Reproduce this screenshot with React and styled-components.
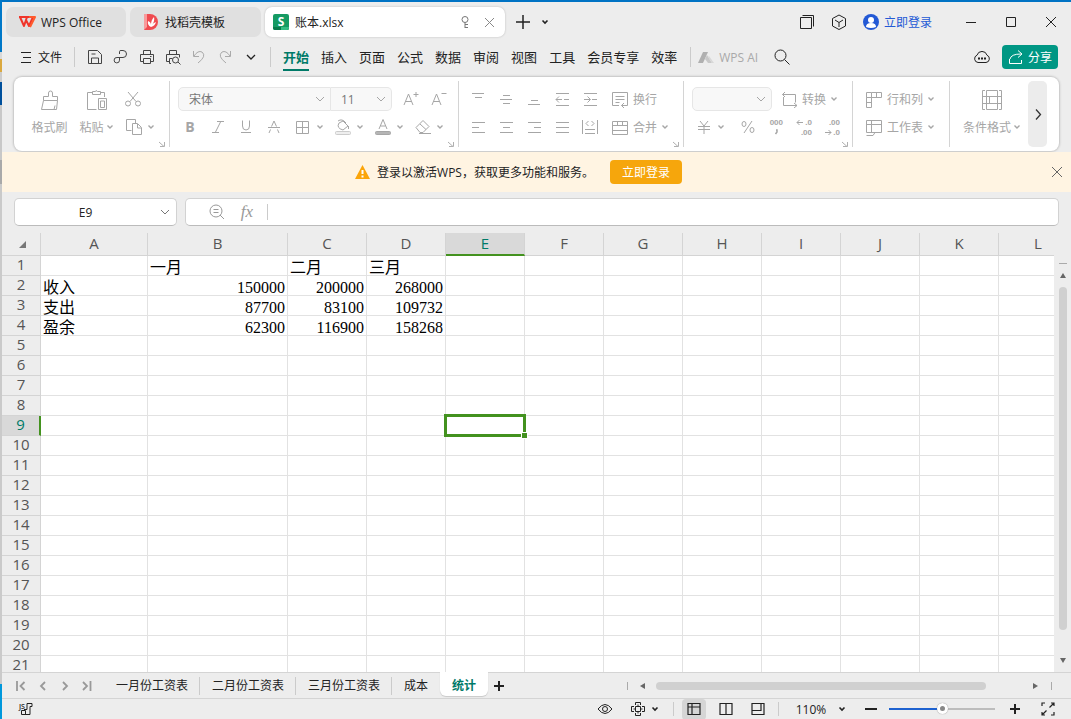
import React, { useState } from 'react';
import styled, { createGlobalStyle, css } from 'styled-components';

const UI = '"Open Sans", "Noto Sans CJK SC", sans-serif';
const SONG = '"Liberation Serif", "Noto Sans CJK SC", serif';
const LINE = '#d4d4d4';
const MUTED = '#a6a6a6';
const TEAL = '#007a68';
const GREEN = '#43921f';

const Global = createGlobalStyle`
  *, *::after { box-sizing: border-box; }
  body { margin: 0; font-family: ${UI}; font-size: 12px; color: #222; }
  button, input, select { font: inherit; color: inherit; border: 0; margin: 0; padding: 0; background: none; outline: none; }
`;

const Desktop = styled.div`
  height: 100vh;
  padding: 2px 0 0 2px;
  overflow: hidden;
  background: linear-gradient(#0078c8 0 52px, #d9d9d9 52px 59px, #dba93f 59px 72px, #cccccc 72px 82px, #00509c 82px 105px, #c8c8c8 105px 160px, #a9a9a9 160px 184px, #cacaca 184px 684px, #0098dc 684px) left / 2px 100% no-repeat, #0073c4;
`;
const Window = styled.div`
  height: 100%;
  display: flex;
  flex-direction: column;
  background: #ededed;
`;
const Spacer = styled.div`
  flex: 1;
`;
const IconButton = styled.button`
  flex: none;
  width: ${(p) => p.$w || 28}px;
  height: 28px;
  display: flex;
  align-items: center;
  justify-content: center;
  color: ${(p) => p.$color || 'inherit'};
`;
const Rule = styled.span`
  flex: none;
  width: 1px;
  height: ${(p) => p.$h || 20}px;
  margin: 0 ${(p) => p.$gap || 0}px;
  background: #cbcbcb;
`;

/* Title bar */
const TitleBar = styled.header`
  flex: none;
  height: 40px;
  padding: 0 0 0 4px;
  display: flex;
  align-items: center;
`;
const DocTab = styled.button`
  flex: none;
  width: ${(p) => p.$w}px;
  height: 30px;
  margin-right: 4px;
  padding: 0 12px;
  display: flex;
  align-items: center;
  gap: 5px;
  border-radius: 7px;
  background: #e0e0e0;
`;
const ActiveDoc = styled.div`
  flex: none;
  width: 240px;
  height: 30px;
  padding: 0 6px 0 8px;
  display: flex;
  align-items: center;
  gap: 6px;
  border-radius: 7px;
  background: #fff;
  box-shadow: 0 0 2px #b5b5b5;
`;
const Login = styled.button`
  display: flex;
  align-items: center;
  gap: 5px;
  margin: 0 19px 0 8px;
  color: #2359d5;
`;

/* Menu */
const MenuBar = styled.nav`
  flex: none;
  height: 34px;
  padding: 0 13px 4px 14px;
  display: flex;
  align-items: center;
`;
const FileButton = styled.button`
  display: flex;
  align-items: center;
  gap: 6px;
  margin: 0 12px 0 4px;
`;
const MenuTab = styled.button`
  flex: none;
  height: 28px;
  margin: 0 6px;
  padding-top: 1px;
  font-size: 13px;
  line-height: 20px;
  border-bottom: 2px solid ${(p) => (p.$on ? TEAL : 'transparent')};
  color: ${(p) => (p.$on ? TEAL : 'inherit')};
  font-weight: ${(p) => (p.$on ? 700 : 400)};
`;
const AiButton = styled.button`
  display: flex;
  align-items: center;
  gap: 4px;
  margin-right: 10px;
  color: #a9a9a9;
`;
const Share = styled.button`
  width: 56px;
  height: 24px;
  margin-left: 6px;
  display: flex;
  align-items: center;
  justify-content: center;
  gap: 4px;
  border-radius: 4px;
  background: #009784;
  color: #fff;
`;

/* Ribbon */
const Ribbon = styled.section`
  flex: none;
  height: 74px;
  margin: 1px 12px 1px 12px;
  padding: 4px 12px 4px 1px;
  display: flex;
  border-radius: 8px;
  background: #fff;
  box-shadow: 0 0 2px 1px #c4c4c4;
  color: ${MUTED};
`;
const Group = styled.div`
  position: relative;
  flex: none;
  width: ${(p) => p.$w}px;
  padding: 4px 0 6px ${(p) => p.$pad || 0}px;
  border-right: 1px solid ${LINE};
  ${(p) => p.$last && css`flex: 1; border: 0;`}
`;
const Corner = styled.svg`
  position: absolute;
  right: 4px;
  bottom: 0;
`;
const Columns = styled.div`
  display: flex;
`;
const Column = styled.div`
  width: ${(p) => p.$w}px;
`;
const Row = styled.div`
  height: 28px;
  padding-left: ${(p) => p.$pad || 0}px;
  display: flex;
  align-items: center;
`;
const BigButton = styled.button`
  width: ${(p) => p.$w}px;
  height: 56px;
  display: flex;
  flex-direction: column;
  align-items: center;
`;
const BigIcon = styled.span`
  height: 30px;
  display: flex;
  align-items: center;
`;
const BigLabel = styled.span`
  height: 24px;
  display: flex;
  align-items: center;
  gap: 2px;
  white-space: nowrap;
`;
const Split = styled.button`
  flex: none;
  width: ${(p) => p.$w || 40}px;
  height: 28px;
  padding-left: 6px;
  display: flex;
  align-items: center;
  gap: 4px;
`;
const LabelButton = styled.button`
  flex: none;
  height: 28px;
  margin-left: ${(p) => p.$ml || 0}px;
  display: flex;
  align-items: center;
  gap: 4px;
  white-space: nowrap;
`;
const Picker = styled.label`
  position: relative;
  flex: none;
  width: ${(p) => p.$w}px;
  height: 24px;
  border: 1px solid #e6e6e6;
  border-radius: ${(p) => p.$r || '5px'};
  background: #f8f8f8;
  & + & { border-left: 0; }
  select { width: 100%; height: 22px; padding-left: 10px; appearance: none; color: #777; opacity: 1; }
  svg { position: absolute; right: 4px; top: 5px; pointer-events: none; }
`;
const ScrollRibbon = styled.button`
  flex: none;
  width: 19px;
  border-radius: 5px;
  background: #ececec;
  color: #333;
  display: flex;
  align-items: center;
  justify-content: center;
`;

/* Sign-in banner */
const Banner = styled.aside`
  flex: none;
  height: 40px;
  display: flex;
  align-items: center;
  background: #fff4e2;
`;
const BannerText = styled.div`
  flex: 1;
  padding-right: 8px;
  display: flex;
  align-items: center;
  justify-content: center;
  gap: 7px;
`;
const BannerButton = styled.button`
  width: 72px;
  height: 24px;
  margin-left: 9px;
  border-radius: 4px;
  background: #f6a60c;
  color: #fff;
`;

/* Formula bar */
const FormulaBar = styled.section`
  flex: none;
  height: 41px;
  padding: 6px 12px 7px;
  display: flex;
  gap: 8px;
`;
const Field = styled.div`
  flex: ${(p) => (p.$w ? 'none' : 1)};
  width: ${(p) => (p.$w ? `${p.$w}px` : 'auto')};
  height: 28px;
  display: flex;
  align-items: center;
  border: 1px solid #d2d2d2;
  border-bottom-color: #bbb;
  border-radius: 5px;
  background: #fff;
  color: #999;
  input { flex: 1; min-width: 0; height: 26px; color: #222; }
`;
const NameInput = styled.input`
  padding-left: 2px;
  text-align: center;
`;

/* Sheet */
const SheetArea = styled.main`
  flex: 1;
  min-height: 0;
  display: flex;
`;
const Viewport = styled.div`
  flex: 1;
  min-width: 0;
  overflow: hidden;
`;
const Sheet = styled.table`
  width: 100%;
  min-width: 1076px;
  table-layout: fixed;
  border-spacing: 0;
  background: #fff;
`;
const headSelected = css`
  background: #d9d9d9;
  color: ${TEAL};
`;
const HeadCell = styled.th`
  height: 23px;
  padding: 0 0 2px;
  border-right: 1px solid ${LINE};
  border-bottom: 1px solid ${LINE};
  background: #ededed;
  color: #555;
  font-size: 15px;
  font-weight: 400;
  line-height: 20px;
  vertical-align: middle;
  svg { display: block; margin: 3px 0 0 17px; }
  ${(p) => p.$on && css`${headSelected} padding-bottom: 1px; border-bottom: 2px solid ${GREEN};`}
`;
const RowHead = styled.th`
  height: 20px;
  padding: 0 0 3px;
  border-right: 1px solid ${LINE};
  border-bottom: 1px solid ${LINE};
  background: #ededed;
  color: #555;
  font-size: 15px;
  font-weight: 400;
  line-height: 16px;
  ${(p) => p.$on && css`${headSelected} border-right: 2px solid ${GREEN};`}
`;
const Cell = styled.td`
  position: relative;
  height: 20px;
  padding: 4px 2px 0 2px;
  border-right: 1px solid #e2e2e2;
  border-bottom: 1px solid #e2e2e2;
  font-family: ${SONG};
  font-size: 16px;
  line-height: 15px;
  color: #000;
  white-space: nowrap;
  text-align: ${(p) => (p.$num ? 'right' : 'left')};
`;
const Cursor = styled.span`
  position: absolute;
  z-index: 1;
  inset: -2px;
  border: 3px solid ${GREEN};
  &::after {
    content: '';
    position: absolute;
    right: -5px;
    bottom: -5px;
    width: 7px;
    height: 7px;
    border: 1px solid #fff;
    background: ${GREEN};
  }
`;
const VScroll = styled.div`
  flex: none;
  width: 17px;
  padding: 30px 0 6px;
  display: flex;
  flex-direction: column;
  align-items: center;
`;
const SplitMark = styled.span`
  flex: none;
  width: ${(p) => (p.$v ? 1 : 8)}px;
  height: ${(p) => (p.$v ? 8 : 1)}px;
  background: #aaa;
`;
const ArrowButton = styled.button`
  width: 12px;
  height: 12px;
  flex: none;
  display: flex;
  align-items: center;
  justify-content: center;
  color: #666;
`;
const VTrack = styled.div`
  flex: 1;
  width: 8px;
  margin: 6px 0;
`;
const VThumb = styled.div`
  width: 8px;
  height: 95%;
  border-radius: 4px;
  background: #d0d0d0;
`;
const VControls = styled.div`
  flex: 1;
  padding-top: 5px;
  display: flex;
  flex-direction: column;
  align-items: center;
`;

/* Sheet tabs */
const TabsBar = styled.nav`
  flex: none;
  height: 27px;
  padding: 0 19px 0 8px;
  display: flex;
  align-items: center;
  border-top: 1px solid ${LINE};
  border-bottom: 1px solid ${LINE};
`;
const NavGroup = styled.div`
  display: flex;
  margin-right: 6px;
  color: #999;
`;
const SheetTab = styled.button`
  flex: none;
  height: 18px;
  padding: 0 11px 0 12px;
  line-height: 18px;
  border-right: 1px solid ${(p) => (p.$plain ? 'transparent' : '#cbcbcb')};
  ${(p) => p.$on && css`
    align-self: flex-start;
    height: 24px;
    margin-top: -1px;
    border-right: 0;
    padding: 3px 12px 0;
    border-radius: 0 0 6px 6px;
    background: #fff;
    box-shadow: 0 1px 1px #c9c9c9;
    color: ${TEAL};
    font-weight: 700;
  `}
`;
const HScroll = styled.div`
  width: 425px;
  display: flex;
  align-items: center;
`;
const HTrack = styled.div`
  flex: 1;
`;
const HThumb = styled.div`
  width: 91%;
  height: 8px;
  border-radius: 4px;
  background: #d0d0d0;
`;

/* Status bar */
const StatusBar = styled.footer`
  flex: none;
  height: 20px;
  padding: 0 7px 0 10px;
  display: flex;
  align-items: center;
`;
const StatusButton = styled.button`
  flex: none;
  width: ${(p) => p.$w || 32}px;
  height: 21px;
  display: flex;
  align-items: center;
  justify-content: center;
  gap: 6px;
  border-radius: 4px;
  background: ${(p) => (p.$on ? '#d5d5d5' : 'none')};
`;
const Slider = styled.input`
  width: 106px;
  height: 14px;
  margin: 0 6px;
  appearance: none;
  &::-webkit-slider-runnable-track {
    height: 2px;
    background: linear-gradient(90deg, #1e62d0 0 51%, #bdbdbd 51%);
  }
  &::-webkit-slider-thumb {
    appearance: none;
    width: 11px;
    height: 11px;
    margin-top: -5px;
    border: 3px solid #fff;
    border-radius: 50%;
    background: #888;
    box-shadow: 0 0 1px #777;
  }
`;

/* Icons */
const Icon = ({ w = 18, h = w, sw = 1, children }) => (
  <svg width={w} height={h} viewBox={`0 0 ${w} ${h}`} fill="none" stroke="currentColor" strokeWidth={sw} aria-hidden="true">
    {children}
  </svg>
);
const P = ({ d, w, h, sw }) => <Icon w={w} h={h} sw={sw}><path d={d} /></Icon>;
const Caret = ({ dark }) => <P w={8} h={8} sw={dark ? 1.6 : 1.4} d="M1.5 2.5 4 5l2.5-2.5" />;
const Letter = ({ x, y, size, weight = 400, fill = 'currentColor', children }) => (
  <text x={x} y={y} fontSize={size} fontWeight={weight} fill={fill} stroke="none" textAnchor="middle" fontFamily={UI}>{children}</text>
);
const Digits = ({ x, y, children }) => (
  <text x={x} y={y} fontSize="8" fontWeight="700" fill="currentColor" stroke="none" textAnchor="end" fontFamily='"Liberation Sans", sans-serif'>{children}</text>
);
const GroupCorner = () => (
  <Corner width="6" height="6" viewBox="0 0 6 6" fill="none" stroke="#b0b0b0"><path d="M0 1 5 5.5M5.5 1v4.5H1" /></Corner>
);
const Close = ({ s = 12 }) => <P w={s} d={`M1 1 ${s - 1} ${s - 1}M${s - 1} 1 1 ${s - 1}`} />;
const Chevron = () => <P w={12} d="M2 4 6 8l4-4" />;

const quick = [
  ['保存', 'M2.5 2.5h9l4 4v9h-13zM5.5 15v-5h7v5M5.5 6h4'],
  ['输出为PDF', 'M7.5 6V3.5q0-1 1.5-1h2a3.5 3.5 0 0 1 0 7H5a2.7 2.7 0 1 0 2.500 2.700V9.500'],
  ['打印', 'M5.5 6V2.5h7V6M5 13.5H2.5v-7h13v7H13M5.5 10.5h7v5h-7zM12 8.5h1.5'],
  ['打印预览', 'M5.5 6V2.5h7V6M5 13.5H2.5v-7h13v3M7 15.5H5.5v-5h3M11.5 9a3 3 0 1 1 0 6a3 3 0 0 1 0-6M14 14l2.5 2.5'],
];
const tabs = ['开始', '插入', '页面', '公式', '数据', '审阅', '视图', '工具', '会员专享', '效率'];
const alignTop = [
  ['顶端对齐', 'M3 3.5h12M6 7.5h7'],
  ['垂直居中', 'M6 5.5h7M3 9.5h12M6 13.5h7'],
  ['底端对齐', 'M6 10.5h7M3 14.5h12'],
  ['减少缩进', 'M3 3.5h13M3 15.5h13M3 9.5h6M11 9.5h5M6 6.5l-3 3 3 3'],
  ['增加缩进', 'M3 3.5h13M3 15.5h13M3 9.5h6M11 9.5h5M6.5 6.5l3 3-3 3'],
];
const alignBottom = [
  ['左对齐', 'M3 4.5h13M3 9.5h7M3 14.5h13'],
  ['居中', 'M3 4.5h13M6 9.5h7M3 14.5h13'],
  ['右对齐', 'M3 4.5h13M9 9.5h7M3 14.5h13'],
  ['两端对齐', 'M3 4.5h13M3 9.5h13M3 14.5h13'],
  ['分散对齐', 'M1.5 2v14M16.5 2v14M4 11.5h10M4 15.5h10M7.5 3 5 5.5 7.5 8M10.5 3 13 5.5 10.5 8'],
];
const columns = [107, 140, 79, 79, 79, 79, 79, 79, 79, 79, 79, 79];
const letters = 'ABCDEFGHIJKL'.split('');
const data = [
  ['', '一月', '二月', '三月'],
  ['收入', 150000, 200000, 268000],
  ['支出', 87700, 83100, 109732],
  ['盈余', 62300, 116900, 158268],
];
const rows = Array.from({ length: 21 }, (_, i) => data[i] || []);
const sheets = ['一月份工资表', '二月份工资表', '三月份工资表', '成本', '统计'];

function Title() {
  return (
    <TitleBar>
      <DocTab $w={120}>
        <svg width="18" height="14" viewBox="0 0 18 14" fill="none" stroke="#f0352b" strokeWidth="2" strokeLinejoin="round">
          <path d="M1 2h8l-3 9L2 2M8 5l3 6 4-9H9" /><path d="M11 2h6l-5 10" stroke="#ff5a2c" />
        </svg>
        WPS Office
      </DocTab>
      <DocTab $w={131}>
        <svg width="18" height="18" viewBox="0 0 18 18">
          <path d="M2 1h6a8 8 0 0 1 0 16H2z" fill="#ef4b50" /><path d="M2 1h3v13l-3 3z" fill="#f89b9c" />
          <path d="M9 14Q5 12 6 8q3 1 3 4 0-5 3-8 1 4-2 8 1-2 4-3-1 4-5 5" fill="#fff" />
        </svg>
        找稻壳模板
      </DocTab>
      <ActiveDoc>
        <svg width="16" height="16" viewBox="0 0 16 16">
          <rect width="16" height="16" rx="2" fill="#159a63" /><path d="M0 13h16v1a2 2 0 0 1-2 2H2a2 2 0 0 1-2-2z" fill="#087a4b" />
          <path d="M8 13h8v1a2 2 0 0 1-2 2H8z" fill="#35bd83" />
          <Letter x={8} y={12} size={12} weight={700} fill="#fff">S</Letter>
        </svg>
        账本.xlsx
        <Spacer />
        <IconButton $w={16} $color="#777" aria-label="固定">
          <P w={12} h={14} d="M6 1.5a3 3 0 1 1 0 6a3 3 0 0 1 0-6M6 7.5V13M6 9.5h3M6 12.5h3" />
        </IconButton>
        <IconButton $w={20} $color="#888" aria-label="关闭标签"><Close s={11} /></IconButton>
      </ActiveDoc>
      <IconButton $w={36} aria-label="新建"><P w={14} sw={1.5} d="M7 0v14M0 7h14" /></IconButton>
      <IconButton $w={8} aria-label="更多标签"><Caret dark /></IconButton>
      <Spacer />
      <IconButton $w={32} aria-label="窗口"><P w={16} d="M1.5 3.5h11v11h-11zM3.5 1.5h11v11" /></IconButton>
      <IconButton $w={32} aria-label="应用"><P w={16} d="M8 1l6.5 3.5V12L8 15.5 1.5 12V4.5zM4 6l4 2.5L12 6M8 8.5V13" /></IconButton>
      <Login>
        <svg width="16" height="16" viewBox="0 0 16 16"><circle cx="8" cy="8" r="8" fill="#2359d5" /><circle cx="8" cy="6" r="3" fill="#fff" /><path d="M3 13q0-4 5-4t5 4q-5 2-10 0" fill="#fff" /></svg>
        立即登录
      </Login>
      <IconButton $w={40} aria-label="最小化"><P w={12} d="M1 6.5h10" /></IconButton>
      <IconButton $w={40} aria-label="最大化"><P w={12} d="M1.5 1.5h9v9h-9z" /></IconButton>
      <IconButton $w={40} aria-label="关闭"><Close /></IconButton>
    </TitleBar>
  );
}

function Menu() {
  return (
    <MenuBar>
      <FileButton><P w={12} d="M1 1.5h10M3 6.5h8M1 11.5h10" />文件</FileButton>
      <Rule />
      <Row $pad={7}>
        {quick.map(([n, d]) => <IconButton key={n} $w={26} $color="#444" aria-label={n}><P d={d} /></IconButton>)}
        <IconButton $w={26} $color="#aaa" aria-label="撤销"><P d="M3.5 3v5.5H9M4 8q4-6 8-4 5 4-4 11" /></IconButton>
        <IconButton $w={26} $color="#aaa" aria-label="恢复"><P d="M14.5 3v5.5H9M14 8q-4-6-8-4-5 4 4 11" /></IconButton>
        <IconButton $w={26} aria-label="更多"><P w={12} sw={1.3} d="M2 4l4 4 4-4" /></IconButton>
      </Row>
      <Rule $gap={6} />
      {tabs.map((t, i) => <MenuTab key={t} $on={i === 0}>{t}</MenuTab>)}
      <Rule $gap={7} />
      <AiButton>
        <svg width="17" height="12" viewBox="0 0 17 12"><path d="M5 1h5L5 12H0z" fill="#b0b0b0" /><path d="M9 4l5 8h-4L7 8z" fill="#c8c8c8" /><path d="M11 5l5 7h-2l-4-6z" fill="#d8d8d8" /></svg>
        WPS AI
      </AiButton>
      <IconButton aria-label="搜索"><P w={16} d="M6.5 1a5.5 5.5 0 1 1 0 11a5.5 5.5 0 0 1 0-11M10.5 10.5l5 5" /></IconButton>
      <Spacer />
      <IconButton aria-label="云">
        <Icon><path d="M5 14.5a3.8 3.8 0 0 1-1-7.3 5.200 5.200 0 0 1 10 0 3.800 3.800 0 0 1-1 7.300z" /><path d="M5 10.5h2M8 10.5h2M11 10.5h2" strokeWidth="2" /></Icon>
      </IconButton>
      <Share><P w={16} d="M1.5 10v4.5h12V11M2 10q1-5 11-5M10 1.5 14 5l-4 3.5" />分享</Share>
    </MenuBar>
  );
}

function RibbonBar() {
  return (
    <Ribbon>
      <Group $w={155} $pad={10}>
        <Columns>
          <BigButton $w={49}>
            <BigIcon><P w={22} d="M4.5 11.5v-4h5V4a2 2 0 0 1 4 0v3.5h5v4zM4.5 11.5l-2 9h15l1-9M15 20.5l1-4" /></BigIcon>
            <BigLabel>格式刷</BigLabel>
          </BigButton>
          <BigButton $w={45}>
            <BigIcon><P w={22} d="M6 3.5H1.5v17h9M15 3.5h3.5V8M6.5 5.5v-3h3q0-2 2 0h3v3zM12.5 9.5h8v11h-8zM14.5 12v6.5h4V12z" /></BigIcon>
            <BigLabel>粘贴<Caret /></BigLabel>
          </BigButton>
          <Column $w={40}>
            <Row $pad={2}><IconButton $w={24} aria-label="剪切"><P d="M4 2l8 9.500M14 2 6 11.5M4 11a2.5 2.5 0 1 1 0 5a2.5 2.5 0 0 1 0-5M14 11a2.5 2.5 0 1 1 0 5a2.5 2.5 0 0 1 0-5" /></IconButton></Row>
            <Split aria-label="复制"><P d="M6.5 12.5h-5v-11h9V5M7.5 5.5h5l4 4v7h-9zM12.5 6v4H16" /><Caret /></Split>
          </Column>
        </Columns>
        <GroupCorner />
      </Group>

      <Group $w={289} $pad={6}>
        <Row $pad={2}>
          <Picker $w={153} $r="5px 0 0 5px"><select aria-label="字体" defaultValue="宋体"><option>宋体</option></select><Chevron /></Picker>
          <Picker $w={61} $r="0 5px 5px 0"><select aria-label="字号" defaultValue="11"><option>11</option></select><Chevron /></Picker>
          <Row $pad={5}>
            <IconButton aria-label="增大字号"><Icon><path d="M2 15 6.5 4 11 15M3.5 11.5h6M11.5 4.5h5M14 2v5" /></Icon></IconButton>
            <IconButton aria-label="减小字号"><Icon><path d="M2 15 6.5 4 11 15M3.5 11.5h6M11.5 3.5h5" /></Icon></IconButton>
          </Row>
        </Row>
        <Row>
          <IconButton aria-label="加粗"><Icon><Letter x={9} y={14} size={14} weight={700}>B</Letter></Icon></IconButton>
          <IconButton aria-label="倾斜"><P d="M8 3.5h7M3 14.5h7M11.5 4l-5 10" /></IconButton>
          <IconButton aria-label="下划线"><P d="M5.5 2.5V8a3.5 4 0 0 0 7 0V2.5M4 14.5h10" /></IconButton>
          <IconButton aria-label="删除线"><P d="M9 3 6.5 8.5M9 3l2.5 5.5M3 9.5h12M5.5 11.5 4 15M12.5 11.5 14 15" /></IconButton>
          <Split aria-label="边框"><P d="M2.5 3.5h12v12h-12zM8.5 3.5v12M2.5 9.5h12" /><Caret /></Split>
          <Split aria-label="填充颜色"><Icon><path d="M5 5l4-2 5 5-5 4q-7-2-4-7M4 3q4-3 8 2M14.5 8v3" /><rect x="1.5" y="13.5" width="15" height="3" rx="1" fill="#eee" stroke="#ccc" /></Icon><Caret /></Split>
          <Split aria-label="字体颜色"><Icon><path d="M9 1.5 5 11M9 1.5 13 11M6.5 8h5" /><rect x="1.5" y="13.5" width="15" height="3" rx="1" fill="#b5b5b5" /></Icon><Caret /></Split>
          <Split aria-label="清除"><P d="M2 9.5l7-7 6 6-6 6H6zM6 6l6 5.5M5 15.5h12" /><Caret /></Split>
        </Row>
        <GroupCorner />
      </Group>

      <Group $w={225} $pad={5}>
        <Row>
          {alignTop.map(([n, d]) => <IconButton key={n} aria-label={n}><P d={d} /></IconButton>)}
          <LabelButton $ml={8}><P w={17} d="M.5 14.5v-13h15V12M3.5 5.5h9M3.5 8.5h9M3.5 11.5h4M.5 14.5H7M15.5 12v2.5h-6M12 12l-2.5 2.5L12 17" />换行</LabelButton>
        </Row>
        <Row>
          {alignBottom.map(([n, d]) => <IconButton key={n} aria-label={n}><P d={d} /></IconButton>)}
          <LabelButton $ml={8}><P w={17} d="M.5 2.5h15v13H.5zM.5 6.5h15M5.5 2.5v4M10.5 2.5v4M.5 11.5h15" />合并<Caret /></LabelButton>
        </Row>
        <GroupCorner />
      </Group>

      <Group $w={169} $pad={5}>
        <Row $pad={3}>
          <Picker $w={80}><select aria-label="数字格式"><option /></select><Chevron /></Picker>
          <LabelButton $ml={9}><P w={17} d="M4 1 1.5 3.5 4 6M1.5 3.5h13v8M2.5 6v8.5H16M13 12l3 2.5-3 2.5" />转换<Caret /></LabelButton>
        </Row>
        <Row>
          <Split $w={45} aria-label="货币"><P d="M5 3l4 5 4-5M3 8.5h12M3 11.5h12M9 8v8" /><Caret /></Split>
          <IconButton aria-label="百分比"><Icon><path d="M13 3 5 15M5 3.5a2 2.5 0 1 1 0 5a2 2.5 0 0 1 0-5M13 9.5a2 2.5 0 1 1 0 5a2 2.5 0 0 1 0-5" /></Icon></IconButton>
          <IconButton aria-label="千位分隔"><Icon w={18} h={20}><Digits x={16} y={8}>000</Digits><path d="M9 13h1v2l-1.5 2" strokeWidth="1.5" /></Icon></IconButton>
          <IconButton aria-label="增加小数位"><Icon w={18} h={20}><path d="M2 5.5h6M4.5 3 2 5.5 4.5 8" /><Digits x={17} y={8}>.0</Digits><Digits x={17} y={18}>.00</Digits></Icon></IconButton>
          <IconButton aria-label="减少小数位"><Icon w={18} h={20}><Digits x={17} y={8}>.00</Digits><path d="M2 15.5h6M5.5 13 8 15.5 5.5 18" /><Digits x={17} y={18}>.0</Digits></Icon></IconButton>
        </Row>
        <GroupCorner />
      </Group>

      <Group $w={97} $pad={13}>
        <Row><LabelButton><P w={17} d="M.5 1.5h5v5h-5zM5.5 1.5h10v5h-10M10.5 1.5v5M.5 6.5h5v10h-5zM.5 11.5h5" />行和列<Caret /></LabelButton></Row>
        <Row><LabelButton><P w={17} d="M.5 13.5v-12h15v12H8M.5 5.5h15M5.5 1.5v12M.5 13.5H9l-2 3H.5" />工作表<Caret /></LabelButton></Row>
      </Group>

      <Group $last $pad={6}>
        <BigButton $w={72}>
          <BigIcon><P w={22} d="M4 1.5H1.5v19H4M18 1.5h2.5v19H18M5.5 1.5h11v6h-11zM1.5 7.5h19M1.5 14.5h19M5.5 7.5v13h11v-13M8.5 7.5v7" /></BigIcon>
          <BigLabel>条件格式<Caret /></BigLabel>
        </BigButton>
      </Group>
      <ScrollRibbon aria-label="向右滚动"><P w={12} sw={1.3} d="M4 1.5l4.5 5-4.5 5" /></ScrollRibbon>
    </Ribbon>
  );
}

function Grid() {
  return (
    <SheetArea>
      <Viewport>
        <Sheet>
          <colgroup>
            <col style={{ width: 39 }} />
            {columns.map((w, i) => <col key={letters[i]} style={{ width: w }} />)}
          </colgroup>
          <thead>
            <tr>
              <HeadCell aria-label="全选"><svg width="8" height="8" viewBox="0 0 8 8"><path d="M7 0v7H0z" fill="#777" /></svg></HeadCell>
              {letters.map((l) => <HeadCell key={l} scope="col" $on={l === 'E'}>{l}</HeadCell>)}
            </tr>
          </thead>
          <tbody>
            {rows.map((row, r) => (
              <tr key={r}>
                <RowHead scope="row" $on={r === 8}>{r + 1}</RowHead>
                {letters.map((l, c) => (
                  <Cell key={l} $num={typeof row[c] === 'number'}>
                    {row[c]}
                    {r === 8 && l === 'E' && <Cursor />}
                  </Cell>
                ))}
              </tr>
            ))}
          </tbody>
        </Sheet>
      </Viewport>
      <VScroll>
        <SplitMark />
        <VControls>
          <ArrowButton aria-label="向上"><svg width="6" height="5" viewBox="0 0 6 5"><path d="M3 0l3 5H0z" fill="currentColor" /></svg></ArrowButton>
          <VTrack><VThumb /></VTrack>
          <ArrowButton aria-label="向下"><svg width="6" height="5" viewBox="0 0 6 5"><path d="M0 0h6L3 5z" fill="currentColor" /></svg></ArrowButton>
        </VControls>
      </VScroll>
    </SheetArea>
  );
}

function SheetTabs() {
  return (
    <TabsBar>
      <NavGroup>
        <IconButton $w={22} aria-label="第一个"><P w={12} sw={1.8} d="M2 1v10M9.5 2l-4 4 4 4" /></IconButton>
        <IconButton $w={22} aria-label="上一个"><P w={12} sw={1.8} d="M8 2 4 6l4 4" /></IconButton>
        <IconButton $w={22} aria-label="下一个"><P w={12} sw={1.8} d="M4 2l4 4-4 4" /></IconButton>
        <IconButton $w={22} aria-label="最后一个"><P w={12} sw={1.8} d="M2 2l4 4-4 4M9.5 1v10" /></IconButton>
      </NavGroup>
      {sheets.map((s, i) => <SheetTab key={s} $on={i === 4} $plain={i === 3}>{s}</SheetTab>)}
      <IconButton $w={22} aria-label="新建工作表"><P w={10} sw={2} d="M5 0v10M0 5h10" /></IconButton>
      <Spacer />
      <HScroll>
        <SplitMark $v />
        <IconButton aria-label="向左"><svg width="5" height="6" viewBox="0 0 5 6"><path d="M5 0v6L0 3z" fill="#666" /></svg></IconButton>
        <HTrack><HThumb /></HTrack>
        <IconButton $w={32} aria-label="向右"><svg width="5" height="6" viewBox="0 0 5 6"><path d="M0 0v6l5-3z" fill="#666" /></svg></IconButton>
        <SplitMark $v />
      </HScroll>
    </TabsBar>
  );
}

function Status() {
  const [zoom, setZoom] = useState(51);
  return (
    <StatusBar>
      <StatusButton $w={28} aria-label="JS 宏">
        <Icon w={16} h={14}><Letter x={4} y={7} size={7} weight={600}>JS</Letter><path d="M9 1.5h5v3h-2v8H3.5v-4h4v4M9 1.5v6H6" /></Icon>
      </StatusButton>
      <Spacer />
      <StatusButton aria-label="护眼模式"><Icon w={16} h={12}><path d="M1 6q7-9 14 0-7 9-14 0" /><circle cx="8" cy="6" r="2.5" /></Icon></StatusButton>
      <StatusButton $w={48} aria-label="阅读模式"><P w={14} d="M4.5 3V.5h5V3M4.5 11v2.500h5V11M3 4.5H.5v5H3M11 4.5h2.5v5H11M4.5 4.5h5v5h-5zM7 2.500v2M7 9.500v2M2.500 7h2M9.500 7h2" /><Caret dark /></StatusButton>
      <Rule $h={14} $gap={4} />
      <Row $pad={4}>
        <StatusButton $w={24} $on aria-label="普通视图"><P w={14} sw={1.2} d="M1 1.5h12v11H1zM1 5h12M5 1.5v11" /></StatusButton>
      </Row>
      <Row $pad={4}>
        <StatusButton aria-label="分页预览"><P w={14} sw={1.2} d="M1 1.5h12v11H1zM7 1.5v11" /></StatusButton>
        <StatusButton aria-label="页面布局"><P w={14} sw={1.2} d="M1 1.5h9v7H1zM1 8.5v4h12v-11h-3" /></StatusButton>
      </Row>
      <Rule $h={14} $gap={4} />
      <StatusButton $w={76}>110%<span /><Caret dark /></StatusButton>
      <IconButton $w={24} aria-label="缩小"><P w={12} sw={2} d="M0 6h12" /></IconButton>
      <Slider type="range" aria-label="缩放比例" value={zoom} onChange={(e) => setZoom(e.target.value)} />
      <IconButton aria-label="放大"><P w={10} sw={2} d="M5 0v10M0 5h10" /></IconButton>
      <Row $pad={3}>
        <StatusButton aria-label="全屏"><P w={14} sw={1.2} d="M1 4V1h3M1 10v3h3M13 4V1h-3M13 10v3h-3M12.5 1.5l-4 4M1.5 12.5l4-4" /></StatusButton>
      </Row>
    </StatusBar>
  );
}

export default function App() {
  return (
    <Desktop>
      <Global />
      <Window>
        <Title />
        <Menu />
        <RibbonBar />
        <Banner>
          <BannerText>
            <svg width="15" height="14" viewBox="0 0 15 14"><path d="M7.5 0 15 14H0z" fill="#fba50a" /><path d="M7.5 5v4M7.5 10.5v2" stroke="#fff" strokeWidth="2" /></svg>
            登录以激活WPS，获取更多功能和服务。
            <BannerButton>立即登录</BannerButton>
          </BannerText>
          <IconButton $color="#666" aria-label="关闭提示"><Close /></IconButton>
        </Banner>
        <FormulaBar>
          <Field $w={163}>
            <NameInput aria-label="名称框" defaultValue="E9" />
            <IconButton $w={22} $color="#777" aria-label="名称列表"><Chevron /></IconButton>
          </Field>
          <Field>
            <Row $pad={15}>
              <IconButton $w={32} aria-label="查找公式"><P w={16} d="M7 1a6 6 0 1 1 0 12a6 6 0 0 1 0-12M11 11l4 4M4.5 5.5h5M4.5 8.5h5" /></IconButton>
              <IconButton aria-label="插入函数">
                <Icon><text x="9" y="14" fontSize="17" fontStyle="italic" fontFamily='"Liberation Serif", serif' fill="currentColor" stroke="none" textAnchor="middle">fx</text></Icon>
              </IconButton>
            </Row>
            <Rule $h={16} $gap={6} />
            <input aria-label="编辑栏" />
          </Field>
        </FormulaBar>
        <Grid />
        <SheetTabs />
        <Status />
      </Window>
    </Desktop>
  );
}
